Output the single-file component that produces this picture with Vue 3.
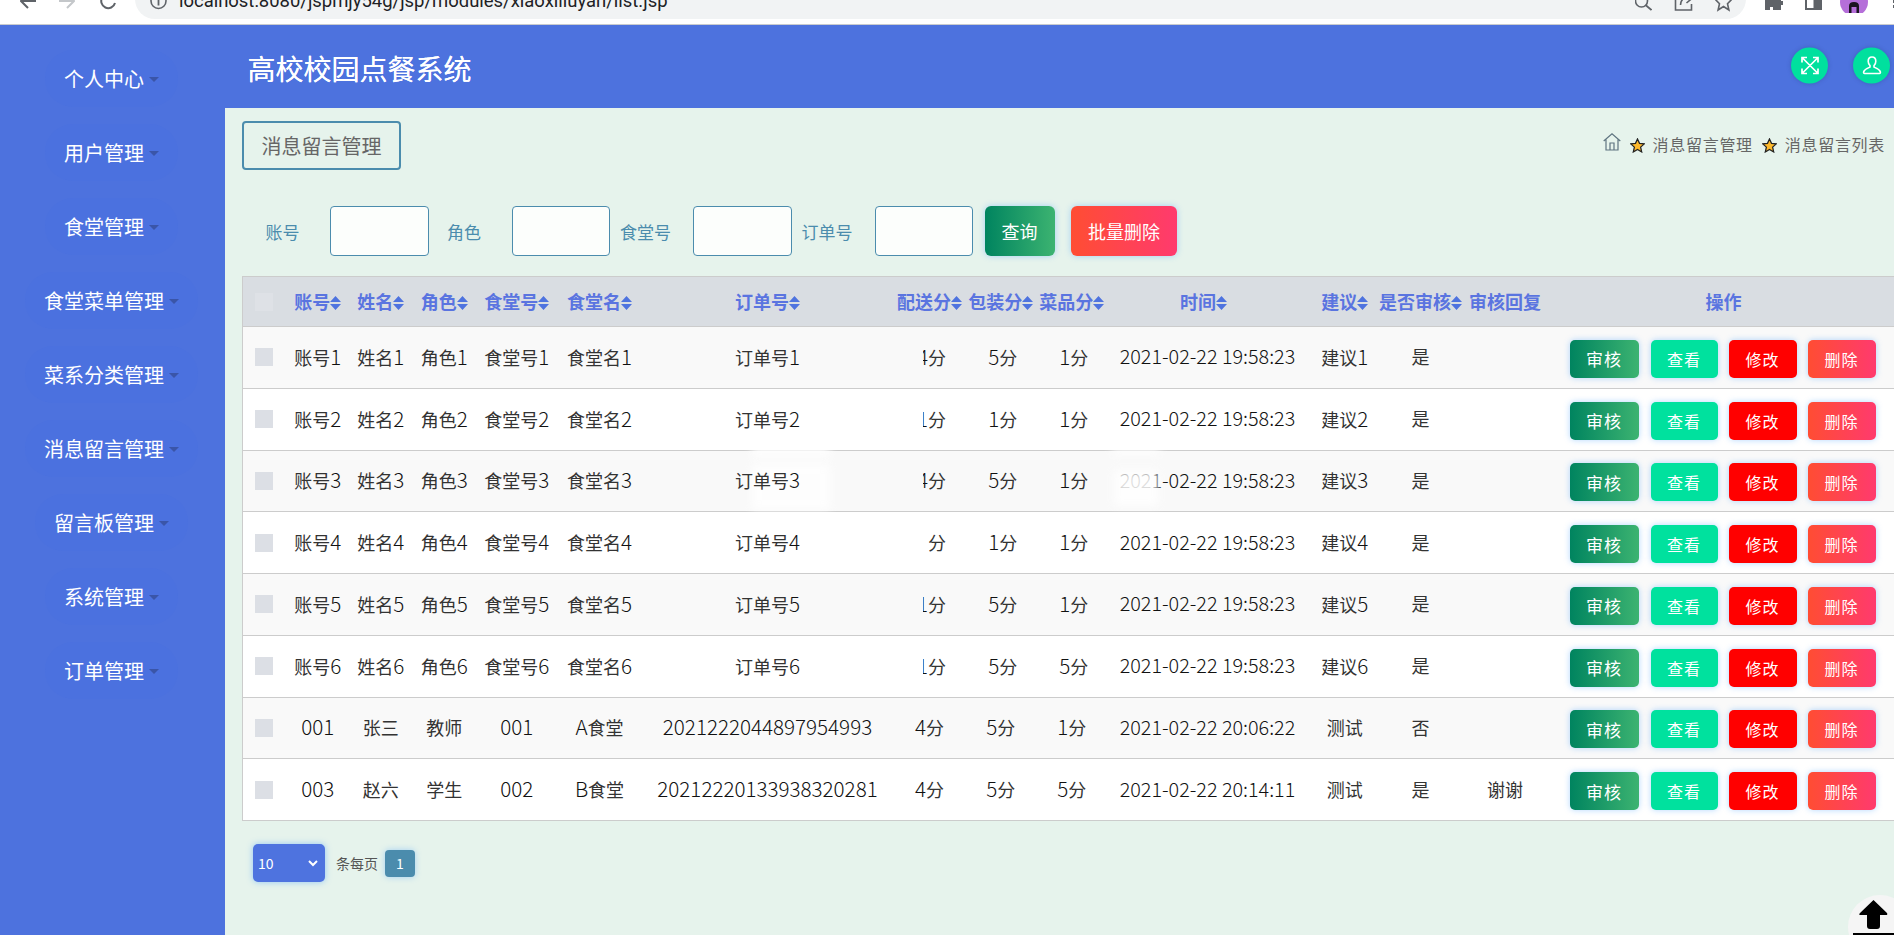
<script setup>
const menus = ['个人中心', '用户管理', '食堂管理', '食堂菜单管理', '菜系分类管理', '消息留言管理', '留言板管理', '系统管理', '订单管理']
const searchFields = ['账号', '角色', '食堂号', '订单号']
const columns = [
  { label: '账号', sort: true, width: 62.5 },
  { label: '姓名', sort: true, width: 63.5 },
  { label: '角色', sort: true, width: 63.5 },
  { label: '食堂号', sort: true, width: 81.5 },
  { label: '食堂名', sort: true, width: 84 },
  { label: '订单号', sort: true, width: 252 },
  { label: '配送分', sort: true, width: 72 },
  { label: '包装分', sort: true, width: 70.5 },
  { label: '菜品分', sort: true, width: 71.5 },
  { label: '时间', sort: true, width: 192 },
  { label: '建议', sort: true, width: 75.5, cls: 'shift-advice' },
  { label: '是否审核', sort: true, width: 91 },
  { label: '审核回复', sort: false, width: 78 },
  { label: '操作', sort: false, width: 359 }
]
const time1 = '2021-02-22 19:58:23'
const rows = [
  ['账号1', '姓名1', '角色1', '食堂号1', '食堂名1', '订单号1', '4分', '5分', '1分', time1, '建议1', '是', ''],
  ['账号2', '姓名2', '角色2', '食堂号2', '食堂名2', '订单号2', '1分', '1分', '1分', time1, '建议2', '是', ''],
  ['账号3', '姓名3', '角色3', '食堂号3', '食堂名3', '订单号3', '4分', '5分', '1分', time1, '建议3', '是', ''],
  ['账号4', '姓名4', '角色4', '食堂号4', '食堂名4', '订单号4', '1分', '1分', '1分', time1, '建议4', '是', ''],
  ['账号5', '姓名5', '角色5', '食堂号5', '食堂名5', '订单号5', '1分', '5分', '1分', time1, '建议5', '是', ''],
  ['账号6', '姓名6', '角色6', '食堂号6', '食堂名6', '订单号6', '1分', '5分', '5分', time1, '建议6', '是', ''],
  ['001', '张三', '教师', '001', 'A食堂', '2021222044897954993', '4分', '5分', '1分', '2021-02-22 20:06:22', '测试', '否', ''],
  ['003', '赵六', '学生', '002', 'B食堂', '20212220133938320281', '4分', '5分', '5分', '2021-02-22 20:14:11', '测试', '是', '谢谢']
]
const cellClass = (rowIndex, colIndex) => {
  const names = []
  if (colIndex === 10) names.push('shift-advice')
  if (colIndex === 9) names.push('time')
  if (rowIndex < 6 && colIndex >= 6 && colIndex <= 8) names.push('shifted')
  return names
}
const isClipped = (rowIndex, colIndex) => rowIndex < 6 && colIndex === 6
const isGone = (rowIndex, colIndex) => rowIndex === 3 && colIndex === 6
const segments = (value) => value.match(/[\x00-\x7f]+|[^\x00-\x7f]+/g) || []
const isLatin = (segment) => /^[\x00-\x7f]/.test(segment)
</script>

<template>
  <div class="page">
    <div class="chrome">
      <svg class="c-back" width="16" height="24" viewBox="-8 -12 16 24"><path d="M8 0H-6M0-7L-7 0 0 7" fill="none" stroke="#5f6368" stroke-width="2"/></svg>
      <svg class="c-forward" width="16" height="24" viewBox="-8 -12 16 24"><path d="M-8 0H6M0-7L7 0 0 7" fill="none" stroke="#c4c7ca" stroke-width="2"/></svg>
      <svg class="c-reload" width="16" height="24" viewBox="-8 -12 16 24"><path d="M7 2A7 7 0 1 1 5-5" fill="none" stroke="#5f6368" stroke-width="2"/></svg>
      <div class="pill">
        <svg width="17" height="24" viewBox="-8.5 -12 17 24"><circle r="7.5" fill="none" stroke="#5f6368" stroke-width="1.6"/><path d="M0-1V4.5" stroke="#5f6368" stroke-width="1.8"/></svg>
        <span class="url">localhost:8080/jspmjy54g/jsp/modules/xiaoxiliuyan/list.jsp</span>
        <svg class="c-search" width="17" height="24" viewBox="-8.5 -12 17 24"><circle cx="-2" r="6" fill="none" stroke="#5f6368" stroke-width="1.6"/><path d="M2 4L8 9" stroke="#5f6368" stroke-width="1.8"/></svg>
        <svg class="c-share" width="19" height="24" viewBox="-9.5 -12 19 24"><path d="M-8-6V9H8V3M-3 4C-3-2 2-4 4-4M3-8L9-3 3 2" fill="none" stroke="#5f6368" stroke-width="1.6"/></svg>
        <svg class="c-star" width="17" height="24" viewBox="-8.5 -12 17 24"><path d="M0-9L2.6-2.5 8.5-2 4 2.8 5.4 9 0 5.5-5.4 9-4 2.8-8.5-2-2.6-2.5Z" fill="none" stroke="#5f6368" stroke-width="1.6"/></svg>
      </div>
      <svg class="c-puzzle" width="18" height="24" viewBox="-9 -12 18 24"><path d="M-9-4H-3V-7H2V-4H7V0H9V4H7V9H-1V6H-4V9H-9Z" fill="#5f6368"/></svg>
      <svg class="c-panel" width="17" height="24" viewBox="-8.5 -12 17 24"><rect x="-7.5" y="-8" width="15" height="16" fill="none" stroke="#5f6368" stroke-width="2"/><rect x="0" y="-8" width="8" height="16" fill="#5f6368"/></svg>
      <svg class="c-avatar" width="28" height="24" viewBox="-14 -12 28 24"><circle r="14" cy="1" fill="#b56fd9"/><path d="M-5 12V5Q-5 1 0 1T5 5V12H2.5V6H-2.5V12Z" fill="#1c1420"/></svg>
      <svg class="c-dots" width="2" height="24" viewBox="0 -12 2 24"><rect y="-1" width="2" height="3" fill="#5f6368"/><rect y="4" width="2" height="3" fill="#5f6368"/></svg>
    </div>

    <div class="shell">
      <aside class="sidebar">
        <div v-for="m in menus" :key="m" class="menu-item">
          <span>{{ m }}</span><i class="caret"></i>
        </div>
      </aside>

      <div class="main">
        <header class="topbar">
          <h1 class="title">高校校园点餐系统</h1>
          <div class="top-actions">
            <button class="round" type="button">
              <svg width="20" height="20" viewBox="0 0 20 20" fill="none" stroke="#fff" stroke-width="1.7"><path d="M3 3L17 17M17 3L3 17M2 7V2H7M13 2H18V7M18 13V18H13M7 18H2V13"/></svg>
            </button>
            <button class="round" type="button">
              <svg width="20" height="20" viewBox="0 0 20 20" fill="none" stroke="#fff" stroke-width="1.6"><path d="M10 1.5C7.6 1.5 6.2 3.4 6.2 5.8C6.2 8 7 9.3 8 10.2V11.6C5.5 12.8 2.5 13.8 1.7 16.2C1.4 17.2 1.7 18 2.6 18H17.4C18.3 18 18.6 17.2 18.3 16.2C17.5 13.8 14.5 12.8 12 11.6V10.2C13 9.3 13.8 8 13.8 5.8C13.8 3.4 12.4 1.5 10 1.5Z"/></svg>
            </button>
          </div>
        </header>

        <main class="content">
          <div class="crumb-row">
            <div class="tab">消息留言管理</div>
            <nav class="crumbs">
              <svg class="home" width="18" height="18" viewBox="0 0 18 18" fill="none" stroke="#5f7480" stroke-width="1.2"><path d="M0.7 8L9 0.8 17.3 8M3 6.5V17H15V6.5M7 17V10H11V17"/></svg>
              <svg class="star" width="15" height="15" viewBox="0 0 24 24"><path d="M12 1.5L15.2 8.6 22.8 9.4 17 14.6 18.7 22.3 12 18.4 5.3 22.3 7 14.6 1.2 9.4 8.8 8.6Z" fill="#fdb92c" stroke="#222" stroke-width="2"/></svg>
              <span>消息留言管理</span>
              <svg class="star star-b" width="15" height="15" viewBox="0 0 24 24"><path d="M12 1.5L15.2 8.6 22.8 9.4 17 14.6 18.7 22.3 12 18.4 5.3 22.3 7 14.6 1.2 9.4 8.8 8.6Z" fill="#fdb92c" stroke="#222" stroke-width="2"/></svg>
              <span>消息留言列表</span>
            </nav>
          </div>

          <form class="search" @submit.prevent>
            <div v-for="f in searchFields" :key="f" class="field">
              <label class="field-label">{{ f }}</label>
              <input class="field-input" type="text" />
            </div>
            <button class="btn-query" type="button">查询</button>
            <button class="btn-batch" type="button">批量删除</button>
          </form>

          <div class="table-wrap">
            <table class="grid">
              <colgroup>
                <col style="width: 44px" />
                <col v-for="c in columns" :key="c.label" :style="{ width: c.width + 'px' }" />
              </colgroup>
              <thead>
                <tr>
                  <th><span class="check check-head"></span></th>
                  <th v-for="c in columns" :key="c.label" :class="c.cls">
                    <span class="head-text">{{ c.label }}<svg v-if="c.sort" class="sort" width="11" height="14" viewBox="0 0 11 14"><path d="M5.5 0L11 6H0ZM0 8H11L5.5 14Z" fill="#4e73df"/></svg></span>
                  </th>
                </tr>
              </thead>
              <tbody>
                <tr v-for="(r, ri) in rows" :key="ri">
                  <td><span class="check"></span></td>
                  <td v-for="(v, ci) in r" :key="ci" :class="cellClass(ri, ci)">
                    <span class="cell-text" :class="{ clip: isClipped(ri, ci), gone: isGone(ri, ci) }"><span v-for="(s, si) in segments(v)" :key="si" :class="{ latin: isLatin(s) }">{{ s }}</span></span>
                  </td>
                  <td class="ops">
                    <div class="ops-row">
                      <button class="op op-audit" type="button">审核</button>
                      <button class="op op-view" type="button">查看</button>
                      <button class="op op-edit" type="button">修改</button>
                      <button class="op op-del" type="button">删除</button>
                    </div>
                  </td>
                </tr>
              </tbody>
            </table>
            <div class="smudge smudge-a"></div>
            <div class="smudge smudge-b"></div>
            <div class="smudge smudge-c"></div>
            <div class="smudge smudge-d"></div>
          </div>

          <div class="pager">
            <div class="select-box">
              <select class="select">
                <option>10</option>
                <option>20</option>
                <option>50</option>
              </select>
              <svg class="chev" width="10" height="7" viewBox="0 0 10 7" fill="none" stroke="#fff" stroke-width="2"><path d="M1 1L5 5 9 1"/></svg>
            </div>
            <span class="per">条每页</span>
            <button class="page-num" type="button">1</button>
          </div>
        </main>
      </div>
    </div>

    <svg class="to-top" width="46" height="40" viewBox="0 0 46 40">
      <circle cx="32" cy="32" r="32" fill="#f5f5f5"/>
      <path d="M25.5 5L39 18Q40 20 38 20H32V31Q32 34 29 34H22Q19 34 19 31V20H13Q10 20 12 18Z" fill="#000"/>
      <rect x="5" y="38" width="41" height="2" fill="#000"/>
    </svg>
  </div>
</template>

<style>
html, body { margin: 0; overflow: hidden; background: #e6f3ec; }
</style>

<style scoped>
.page { width: 1894px; height: 935px; overflow: hidden; position: relative; font-family: "Noto Sans CJK SC", "Noto Sans", sans-serif; color: #333; }
.chrome { height: 24px; border-bottom: 1px solid #c9cbce; background: #fff; display: flex; align-items: flex-start; overflow: hidden; padding-left: 19.5px; }
.chrome svg { flex: none; margin-top: -11px; }
.c-forward { margin-left: 23.5px; }
.c-reload { margin-left: 25px; }
.pill { width: 1611px; height: 40px; margin: -21px 0 0 19px; padding: 0 14px 0 15px; box-sizing: border-box; background: #f1f3f4; border-radius: 20px; display: flex; align-items: flex-start; flex: none; }
.pill svg { margin-top: 10px; }
.url { width: 1456px; margin-left: 12px; font-family: Roboto, sans-serif; font-size: 18.45px; line-height: 24px; margin-top: 10px; color: #202124; white-space: nowrap; flex: none; }
.c-search { margin-left: 0; }
.c-share { margin-left: 22px; }
.c-star { margin-left: 22px; }
.c-puzzle { margin-left: 19px; }
.c-panel { margin-left: 22px; }
.c-avatar { margin-left: 18px; }
.c-dots { margin-left: 25px; }

.shell { display: flex; height: 910px; }
.sidebar { width: 225px; flex: none; background: #4d72de; padding: 25px 2px 0 0; box-sizing: border-box; display: flex; flex-direction: column; align-items: center; gap: 17px; }
.menu-item { height: 57px; padding: 0 19px; border-radius: 28px; background: #4b71df; color: #fff; font-size: 20px; display: flex; align-items: center; white-space: nowrap; }
.caret { width: 0; height: 0; margin-left: 5px; border-left: 5px solid transparent; border-right: 5px solid transparent; border-top: 5px solid #3a55a8; margin-top: 2px; }

.main { flex: 1; min-width: 0; }
.topbar { height: 83px; background: #4d72de; display: flex; align-items: center; justify-content: space-between; padding: 0 4px 0 22.5px; box-sizing: border-box; }
.title { margin: 0; color: #fff; font-size: 28px; font-weight: 400; text-shadow: 0 0 .6px #fff; transform: translateY(1px); }
.top-actions { display: flex; gap: 25px; transform: translateY(-1.5px); }
.round { width: 37px; height: 36px; border: 0; padding: 0; border-radius: 50%; background: #00e09e; box-shadow: 0 0 4px rgba(40, 60, 120, .35); display: flex; align-items: center; justify-content: center; }

.content { background: #e6f3ec; height: 827px; padding: 13px 0 0 17px; box-sizing: border-box; }
.crumb-row { display: flex; justify-content: space-between; align-items: center; padding-right: 9px; }
.tab { width: 159px; height: 49px; box-sizing: border-box; border: 2px solid #4b8cad; border-radius: 4px; color: #666; font-size: 20px; display: flex; align-items: center; justify-content: center; }
.crumbs { display: flex; align-items: center; color: #666; font-size: 16px; letter-spacing: .7px; margin-top: -3px; }
.crumbs span { line-height: 20px; }
.home { margin: -4px 9px 0 0; }
.star { margin: 3px 8px 0 0; }
.star-b { margin-left: 9px; }

.search { display: flex; align-items: center; margin-top: 36px; padding-left: 5px; height: 50px; }
.field { display: flex; align-items: center; width: 181.5px; flex: none; }
.field-label { width: 71px; margin-right: 12px; text-align: center; font-size: 17px; color: #4b8cad; flex: none; }
.field-input { width: 98.5px; height: 50px; box-sizing: border-box; border: 1px solid #4b8cad; border-radius: 4px; background: rgba(255, 255, 255, .85); padding: 0; outline: none; flex: none; }
.btn-query, .btn-batch { height: 50px; border: 0; border-radius: 6px; color: #fff; font: inherit; font-size: 18px; box-shadow: 0 0 6px rgba(64, 158, 255, .4); padding: 0; }
.btn-query { width: 70px; margin-left: 11.5px; background: linear-gradient(90deg, #00845f, #3cb371); }
.btn-batch { width: 106px; margin-left: 16.5px; background: linear-gradient(90deg, #ff4d33, #ff3a6e); }

.table-wrap { position: relative; margin-top: 20px; width: 1661px; }
.grid { width: 1660.5px; table-layout: fixed; border-collapse: collapse; font-size: 18px; line-height: 26px; }
.grid th, .grid td { border: 1px solid #ccc; border-width: 1px 0; padding: 0; text-align: center; white-space: nowrap; font-weight: 400; }
.grid th:first-child, .grid td:first-child { border-left: 1px solid #ccc; }
.grid thead tr { height: 50px; background: #d9dde2; }
.grid th { color: #5a74e0; font-weight: 700; }
.grid tbody tr { height: 61.75px; background: #fff; }
.grid tbody tr:nth-child(odd) { background: #f9f9f9; }
.head-text { position: relative; top: -1px; }
.sort { vertical-align: -1px; margin-left: 0; }
.check { display: block; width: 18px; height: 18px; margin-left: 12px; background: #dcdfe5; }
.check-head { background: #dee1e6; }
.cell-text { position: relative; z-index: 1; top: -1px; }
.latin { font-size: 20.6px; font-weight: 300; color: #111; }
.time { padding-left: 8px !important; }
.time .latin { font-size: 19.8px; }
.shift-advice { padding-left: 15px !important; }
.shifted { padding-left: 4px !important; }
.clip { display: inline-block; clip-path: inset(-4px -4px -4px 6px); }
.gone { clip-path: inset(-4px -4px -4px 11.5px); }
.ops { padding-right: 2px !important; }
.ops-row { display: flex; justify-content: center; gap: 11px; margin-top: 3px; }
.op { height: 38px; border: 0; border-radius: 5px; padding: 0; color: #fff; font-family: "Noto Sans CJK SC", sans-serif; font-size: 16px; letter-spacing: 1px; box-shadow: 0 0 6px rgba(64, 158, 255, .4); }
.op-audit { width: 69px; font-size: 17px; background: linear-gradient(90deg, #00845f, #3cb371); margin-right: 1px; }
.op-view { width: 67px; background: #00e19e; }
.op-edit { width: 68px; background: #f00; }
.op-del { width: 68px; background: linear-gradient(90deg, #ff4d33, #ff3a6e); }

.smudge { position: absolute; z-index: 0; background: #fff; filter: blur(4px); pointer-events: none; }
.smudge-a { left: 510px; top: 138px; width: 78px; height: 44px; opacity: .75; }
.smudge-b { left: 510px; top: 188px; width: 78px; height: 46px; opacity: .8; }
.smudge-c { left: 870px; top: 140px; width: 48px; height: 40px; opacity: .6; }
.smudge-d { left: 872px; top: 194px; width: 44px; height: 36px; opacity: .85; z-index: 2; }

.pager { display: flex; align-items: center; margin: 23px 0 0 11px; }
.select-box { position: relative; width: 72px; height: 38px; }
.select { width: 72px; height: 38px; box-sizing: border-box; appearance: none; border: 0; border-radius: 5px; background: #4e73df; color: #fff; font: inherit; font-size: 14px; padding: 0 0 0 5px; box-shadow: 0 0 6px rgba(64, 158, 255, .5); outline: none; }
.chev { position: absolute; right: 7px; top: 16px; pointer-events: none; }
.per { margin-left: 11px; font-size: 14px; color: #555; }
.page-num { width: 30px; height: 27px; margin-left: 7px; padding: 0; border: 0; border-radius: 4px; background: #4b8cad; color: #fff; font: inherit; font-size: 14px; box-shadow: 0 0 6px rgba(64, 158, 255, .4); }

.to-top { position: absolute; right: 0; bottom: 0; }
</style>
